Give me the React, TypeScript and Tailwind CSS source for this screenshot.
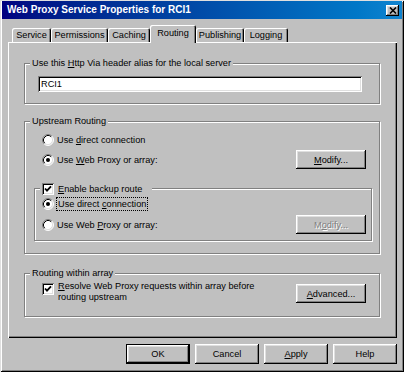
const raised =
  "shadow-[inset_-1px_-1px_#000,inset_1px_1px_#fff,inset_-2px_-2px_#808080,inset_2px_2px_#dfdfdf]";
const sunken =
  "shadow-[inset_1px_1px_#808080,inset_-1px_-1px_#fff,inset_2px_2px_#000,inset_-2px_-2px_#dfdfdf]";
const group = "border border-[#808080] shadow-[inset_1px_1px_#fff,1px_1px_#fff]";
const legend = "-mt-[7px] ml-[5px] w-fit bg-[#c0c0c0] px-[2px]";

const tabs = [
  { label: "Service", cls: "w-[39px]" },
  { label: "Permissions", cls: "w-[57px]" },
  { label: "Caching", cls: "w-[42px]" },
  { label: "Routing", cls: "w-[46px]", active: true },
  { label: "Publishing", cls: "w-[48px]" },
  { label: "Logging", cls: "w-[44px]" },
];

function Radio({ checked }: { checked?: boolean }) {
  return (
    <svg width="12" height="12" viewBox="0 0 12 12" className="shrink-0">
      <circle cx="6" cy="6" r="5" fill="#fff" />
      <path d="M2.11 9.89A5.5 5.5 0 0 1 9.89 2.11" stroke="#808080" fill="none" />
      <path d="M9.89 2.11A5.5 5.5 0 0 1 2.11 9.89" stroke="#fff" fill="none" />
      <path d="M2.82 9.18A4.5 4.5 0 0 1 9.18 2.82" stroke="#000" fill="none" />
      <path d="M9.18 2.82A4.5 4.5 0 0 1 2.82 9.18" stroke="#dfdfdf" fill="none" />
      {checked && <circle cx="6" cy="6" r="2" fill="#000" />}
    </svg>
  );
}

function Checkbox() {
  return (
    <div className={`flex h-[12px] w-[12px] shrink-0 items-center justify-center bg-white ${sunken}`}>
      <svg width="12" height="12" viewBox="0 0 12 12">
        <path d="M3 5.5l2 2.2 4-4.4" stroke="#000" strokeWidth="1.8" fill="none" />
      </svg>
    </div>
  );
}

function Button({
  children,
  cls = "",
  disabled,
  isDefault,
}: {
  children: React.ReactNode;
  cls?: string;
  disabled?: boolean;
  isDefault?: boolean;
}) {
  return (
    <div
      className={`flex shrink-0 items-center justify-center bg-[#c0c0c0] ${cls} ${
        isDefault ? "border border-black" : ""
      }`}
    >
      <div
        className={`flex h-full w-full items-center justify-center ${raised} ${
          disabled ? "text-[#808080] [text-shadow:1px_1px_#fff]" : ""
        }`}
      >
        {children}
      </div>
    </div>
  );
}

export default function App() {
  return (
    <div className="flex h-[372px] w-[404px] flex-col overflow-hidden bg-[#c0c0c0] px-[2px] pt-[1px] pb-[2px] font-['Liberation_Sans',Arial,sans-serif] text-[9.2px] leading-[12px] text-black shadow-[inset_1px_1px_#dfdfdf,inset_-1px_-1px_#000,inset_2px_2px_#fff,inset_-2px_-2px_#808080]">
      {/* title bar */}
      <div className="flex h-[18px] shrink-0 items-center justify-between bg-linear-to-r from-[#000080] to-[#1084d0] pr-[3px] pl-[5px]">
        <span className="text-[10px] font-bold text-white">Web Proxy Service Properties for RCI1</span>
        <div className={`flex h-[11px] w-[13px] items-center justify-center bg-[#c0c0c0] ${raised}`}>
          <svg width="8" height="7" viewBox="0 0 8 7">
            <path d="M1 0.5L7 6.5M7 0.5L1 6.5" stroke="#000" strokeWidth="1.6" />
          </svg>
        </div>
      </div>

      <div className="mt-[6px] mr-[5px] ml-[6px]">
        {/* tabs */}
        <div className="relative z-10 flex h-[17px] items-end pl-[4px]">
          {tabs.map((t) =>
            t.active ? (
              <div
                key={t.label}
                className={`${t.cls} -mb-[1px] flex h-[18px] justify-center rounded-t-[2px] bg-[#c0c0c0] pt-[2px] shadow-[inset_1px_1px_#fff,inset_-1px_0_#000,inset_-2px_0_#808080]`}
              >
                {t.label}
              </div>
            ) : (
              <div
                key={t.label}
                className={`${t.cls} flex h-[14px] items-center justify-center rounded-t-[2px] shadow-[inset_1px_1px_#fff,inset_-1px_0_#000,inset_-2px_0_#808080]`}
              >
                {t.label}
              </div>
            )
          )}
        </div>

        {/* panel */}
        <div className="h-[296px] pt-[21px] pr-[17px] pl-[16px] shadow-[inset_1px_1px_#fff,inset_-1px_-1px_#000,inset_-2px_-2px_#808080]">
          {/* via header alias */}
          <div className={`${group} pb-[11px]`}>
            <div className={legend}>
              Use this <span className="underline">H</span>ttp Via header alias for the local server
            </div>
            <div className={`mt-[7px] mr-[17px] ml-[13px] flex h-[16px] items-center bg-white pl-[3px] ${sunken}`}>
              RCI1
            </div>
          </div>

          {/* upstream routing */}
          <div className={`${group} mt-[17px] pb-[12px]`}>
            <div className={legend}>Upstream Routing</div>
            <div className="mt-[6px] ml-[17px] flex h-[14px] items-center gap-[3px]">
              <Radio />
              <span>
                Use <span className="underline">d</span>irect connection
              </span>
            </div>
            <div className="mt-[3px] mr-[13px] ml-[17px] flex items-center justify-between">
              <div className="flex items-center gap-[3px]">
                <Radio checked />
                <span>
                  Use <span className="underline">W</span>eb Proxy or array:
                </span>
              </div>
              <Button cls="h-[19px] w-[70px]">
                <span>
                  <span className="underline">M</span>odify...
                </span>
              </Button>
            </div>

            {/* backup route */}
            <div className={`${group} mt-[19px] mr-[7px] ml-[9px] pb-[6px]`}>
              <div className="-mt-[7px] ml-[5px] flex h-[13px] w-fit items-center gap-[4px] bg-[#c0c0c0] pr-[10px] pl-[2px]">
                <Checkbox />
                <span>
                  <span className="underline">E</span>nable backup route
                </span>
              </div>
              <div className="mt-[2px] ml-[7px] flex h-[14px] items-center gap-[2px]">
                <Radio checked />
                <span className="border border-dotted border-black px-[1px]">
                  Use direct <span className="underline">c</span>onnection
                </span>
              </div>
              <div className="mt-[4px] mr-[5px] ml-[7px] flex items-center justify-between">
                <div className="flex items-center gap-[3px]">
                  <Radio />
                  <span>
                    Use Web <span className="underline">P</span>roxy or array:
                  </span>
                </div>
                <Button cls="h-[19px] w-[70px]" disabled>
                  <span>
                    M<span className="underline">o</span>dify...
                  </span>
                </Button>
              </div>
            </div>
          </div>

          {/* routing within array */}
          <div className={`${group} mt-[19px] pb-[13px]`}>
            <div className={legend}>Routing within array</div>
            <div className="mt-[2px] mr-[13px] ml-[17px] flex items-start justify-between">
              <div className="flex items-start gap-[4px] leading-[11px]">
                <div className="mt-[2px]">
                  <Checkbox />
                </div>
                <span>
                  <span className="underline">R</span>esolve Web Proxy requests within array before
                  <br />
                  routing upstream
                </span>
              </div>
              <Button cls="mt-[3px] h-[19px] w-[70px]">
                <span>
                  <span className="underline">A</span>dvanced...
                </span>
              </Button>
            </div>
          </div>
        </div>
      </div>

      {/* dialog buttons */}
      <div className="mt-[6px] mr-[5px] flex justify-end gap-[5px]">
        <Button cls="h-[20px] w-[64px]" isDefault>
          OK
        </Button>
        <Button cls="h-[20px] w-[64px]">Cancel</Button>
        <Button cls="h-[20px] w-[64px]">
          <span>
            <span className="underline">A</span>pply
          </span>
        </Button>
        <Button cls="h-[20px] w-[64px]">Help</Button>
      </div>
    </div>
  );
}
